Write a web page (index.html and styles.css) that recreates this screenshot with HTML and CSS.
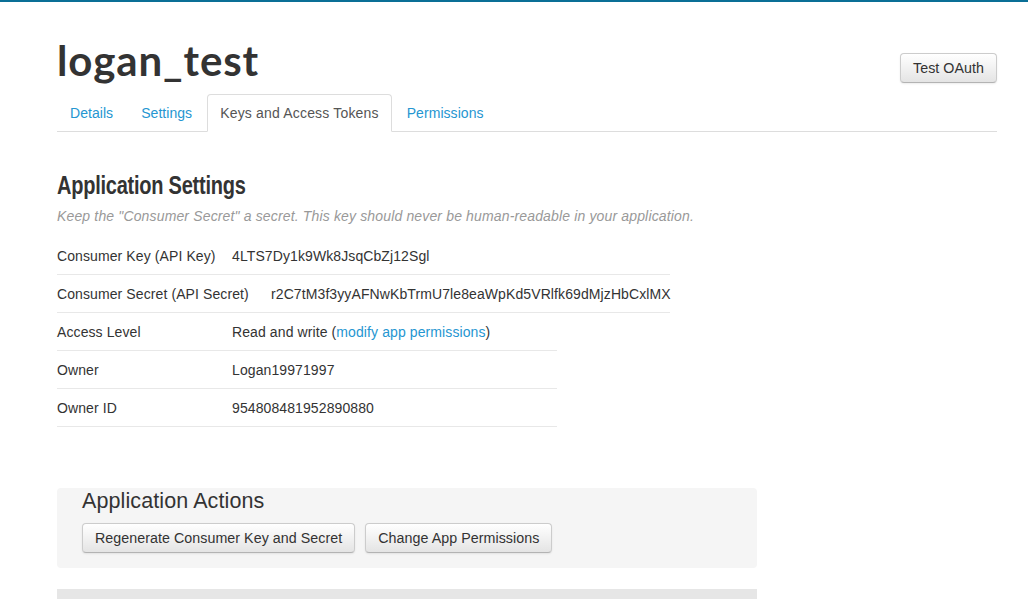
FILE: index.html
```html
<!DOCTYPE html>
<html>
<head>
<meta charset="utf-8">
<title>logan_test</title>
<link rel="stylesheet" href="styles.css">
</head>
<body>
<div class="topbar"></div>
<div class="page">
  <div class="header">
    <h1 class="app-title">logan_test</h1>
    <button class="btn">Test OAuth</button>
  </div>
  <ul class="tabs">
    <li><a class="tab-link" href="#">Details</a></li>
    <li><a class="tab-link" href="#">Settings</a></li>
    <li><a class="tab-link active" href="#">Keys and Access Tokens</a></li>
    <li><a class="tab-link" href="#">Permissions</a></li>
  </ul>

  <h2 class="section-title"><span class="section-title-text">Application Settings</span></h2>
  <p class="hint">Keep the "Consumer Secret" a secret. This key should never be human-readable in your application.</p>

  <div class="kv-group kv-group-wide">
    <div class="kv-row"><span class="kv-label">Consumer Key (API Key)</span><span class="kv-value">4LTS7Dy1k9Wk8JsqCbZj12Sgl</span></div>
    <div class="kv-row"><span class="kv-label kv-label-wide">Consumer Secret (API Secret)</span><span class="kv-value">r2C7tM3f3yyAFNwKbTrmU7le8eaWpKd5VRlfk69dMjzHbCxlMX</span></div>
  </div>
  <div class="kv-group kv-group-narrow">
    <div class="kv-row"><span class="kv-label">Access Level</span><span class="kv-value">Read and write (<a class="link" href="#">modify app permissions</a>)</span></div>
    <div class="kv-row"><span class="kv-label">Owner</span><span class="kv-value">Logan19971997</span></div>
    <div class="kv-row"><span class="kv-label">Owner ID</span><span class="kv-value">954808481952890880</span></div>
  </div>

  <div class="actions">
    <h3 class="actions-title">Application Actions</h3>
    <div class="actions-buttons">
      <button class="btn">Regenerate Consumer Key and Secret</button>
      <button class="btn">Change App Permissions</button>
    </div>
  </div>
  <div class="next-box"></div>
</div>
</body>
</html>
```

FILE: styles.css
```css
html, body {
  margin: 0;
  padding: 0;
  background: #fff;
}
body {
  font-family: "Liberation Sans", Arial, sans-serif;
  font-size: 14px;
  line-height: 20px;
  color: #333;
  letter-spacing: 0.1px;
  overflow: hidden;
}
.topbar {
  height: 2px;
  background: #0a6f96;
}
.page {
  width: 940px;
  padding-left: 57px;
}
.header {
  display: flex;
  justify-content: space-between;
  align-items: flex-start;
  height: 92px;
}
.app-title {
  margin: 0;
  padding-top: 33px;
  font-family: Lato, "Liberation Sans", sans-serif;
  font-weight: 700;
  font-size: 42px;
  line-height: 50px;
  color: #333;
  letter-spacing: 0.9px;
}
.btn {
  font-family: "Liberation Sans", Arial, sans-serif;
  font-size: 14.25px;
  line-height: 20px;
  letter-spacing: 0.05px;
  color: #333;
  padding: 4px 12px;
  border: 1px solid #ccc;
  border-bottom-color: #b3b3b3;
  border-radius: 4px;
  background: linear-gradient(#ffffff, #e4e4e4);
  box-shadow: inset 0 1px 0 rgba(255,255,255,.2), 0 1px 2px rgba(0,0,0,.08);
  cursor: pointer;
}
.header .btn {
  margin-top: 51px;
}
.tabs {
  list-style: none;
  margin: 0;
  padding: 0;
  display: flex;
  border-bottom: 1px solid #ddd;
}
.tabs li {
  margin-bottom: -1px;
  margin-right: 2px;
}
.tab-link {
  display: block;
  padding: 8px 12px;
  line-height: 20px;
  border: 1px solid transparent;
  border-radius: 4px 4px 0 0;
  color: #2596d1;
  text-decoration: none;
  letter-spacing: 0.05px;
}
.tab-link.active {
  color: #555;
  background: #fff;
  border-color: #ddd #ddd transparent;
  letter-spacing: 0.18px;
}
.section-title {
  margin: 38px 0 0;
  font-family: "Liberation Sans", Arial, sans-serif;
  font-weight: 700;
  font-size: 25px;
  line-height: 30px;
  color: #333;
  letter-spacing: -0.3px;
}
.section-title-text {
  display: inline-block;
  transform: scaleX(0.8);
  transform-origin: left center;
}
.hint {
  margin: 6px 0 11px;
  font-style: italic;
  color: #999;
  letter-spacing: 0.15px;
}
.kv-group-wide { width: 613px; }
.kv-group-narrow { width: 500px; }
.kv-row {
  display: flex;
  height: 37px;
  align-items: center;
  border-bottom: 1px solid #e8e8e8;
}
.kv-label {
  width: 175px;
  flex: none;
}
.kv-label-wide {
  width: 214px;
}
.kv-value {
  white-space: nowrap;
}
.link {
  color: #2596d1;
  text-decoration: none;
}
.actions {
  margin-top: 61px;
  width: 700px;
  box-sizing: border-box;
  background: #f5f5f5;
  border-radius: 4px;
  padding: 0 25px 15px;
}
.actions-title {
  margin: 0;
  font-weight: 400;
  font-size: 21.5px;
  line-height: 26px;
  color: #333;
  letter-spacing: 0.1px;
}
.actions-buttons {
  display: flex;
  gap: 10px;
  margin-top: 9px;
}
.next-box {
  margin-top: 21px;
  width: 700px;
  height: 10px;
  background: #e6e6e6;
}
```
